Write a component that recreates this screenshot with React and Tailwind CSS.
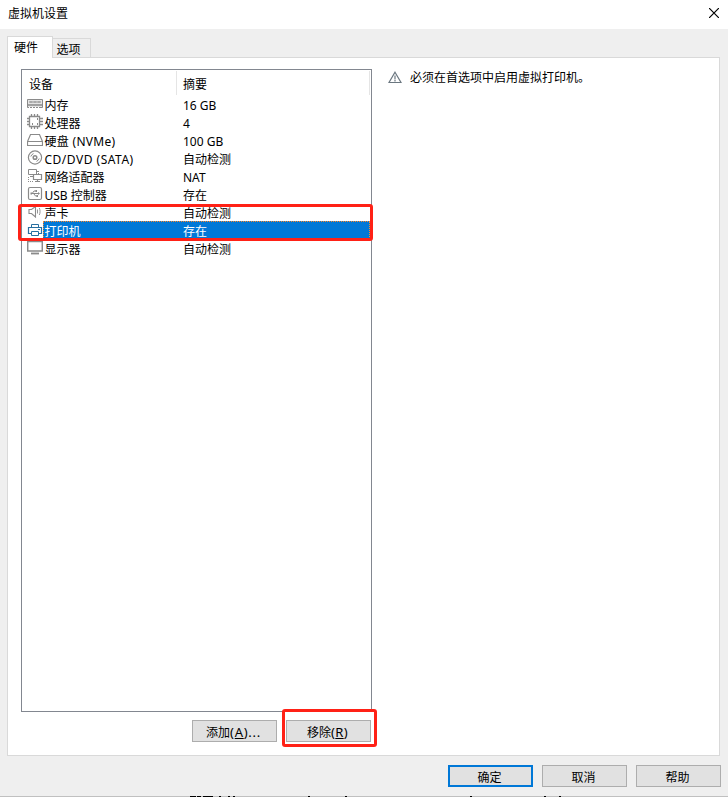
import React, { useState } from 'react';

const devices = [
  { id: 'memory', name: '内存', summary: '16 GB' },
  { id: 'cpu', name: '处理器', summary: '4' },
  { id: 'disk', name: '硬盘 (NVMe)', summary: '100 GB', spacing: 'tracking-[0.3px]' },
  { id: 'cd', name: 'CD/DVD (SATA)', summary: '自动检测', spacing: 'tracking-[0.5px]' },
  { id: 'network', name: '网络适配器', summary: 'NAT' },
  { id: 'usb', name: 'USB 控制器', summary: '存在' },
  { id: 'sound', name: '声卡', summary: '自动检测' },
  { id: 'printer', name: '打印机', summary: '存在' },
  { id: 'display', name: '显示器', summary: '自动检测' },
];

// 16x16 device glyphs
const glyphs = {
  memory: (
    <>
      <path d="M.5 3.5h15v8H.5z" fill="#e4e4e4" />
      <path d="M2.5 5.5h3v1h-3zM6.5 5.5h3v1h-3zM10.5 5.5h3v1h-3z" stroke="#aaa" />
      <path d="M1 9h14" strokeWidth="1.5" />
      <path d="M2 11.5h12" stroke="#fff" strokeDasharray="1 2" />
    </>
  ),
  cpu: (
    <>
      <path d="M2.5 2.5h10v10h-10z" strokeWidth="1.3" />
      <path d="M4.5 0v2M7.5 0v2M10.5 0v2M4.5 13v2M7.5 13v2M10.5 13v2M0 4.5h2M0 7.5h2M0 10.5h2M13 4.5h3M13 7.5h3M13 10.5h3" strokeWidth="1.3" />
      <path d="M10.5 4v2M10.5 9v2M5.5 9v2" />
    </>
  ),
  disk: <path d="M3.5 2.5h9l3 7v4H.5v-4zM.5 9.5h15" strokeWidth="1.2" />,
  cd: (
    <>
      <circle cx="8" cy="7.5" r="6.6" strokeWidth="1.2" />
      <circle cx="8" cy="7.5" r="1.8" strokeWidth="1.5" />
      <path d="M3.8 6.5q.7-2 2.7-2.9M12.2 8.5q-.7 2-2.7 2.9" />
    </>
  ),
  network: (
    <>
      <path d="M1.5 1.5h8v5h-8z" />
      <path d="M6.5 6.5h8v5h-8z" fill="#fff" strokeWidth="1.2" />
      <path d="M3 8.5h3M10.5 12v2M8 13.5h5" strokeWidth="1.2" />
      <path d="M1.5 9v5M1 13.5h6M11.5 3v3M10 3.5h2" strokeDasharray="1 1" />
    </>
  ),
  usb: (
    <>
      <rect x="1.5" y="1.5" width="13" height="12" rx="1.5" strokeWidth="1.2" />
      <path d="M4 7.5h8M5.5 7L7 5h2M7 8l1.5 2H10" />
      <path d="M3.5 6.500H5v2H3.5zM11 6l2 1.500L11 9zM8.500 4H10v2H8.500zM9.500 9H11v2H9.500z" fill="#8a8a8a" stroke="none" />
    </>
  ),
  sound: (
    <>
      <path d="M2 5.5h2.500L8.500 2.500v10.500l-4-3.500H2z" strokeWidth="1.1" />
      <path d="M10.500 5.500v4M12.300 4c1 2 1 5 0 7" strokeWidth=".9" />
    </>
  ),
  printer: (
    <>
      <path d="M4.500 5.500v-3h7v3" />
      <path d="M4 11.500H1.500v-6h13v6H12" strokeWidth="1.2" />
      <path d="M4.500 9.500h7v4h-7zM11 7.500h2" />
    </>
  ),
  display: (
    <>
      <path d="M.7 1.500h14.600v9.500H.7z" strokeWidth="1.500" />
      <path d="M4 13.500h8" strokeWidth="1.800" />
    </>
  ),
};

function DeviceIcon({ id }) {
  return (
    <svg width="16" height="16" viewBox="0 0 16 16" fill="none" stroke={id === 'printer' ? '#286fa0' : '#8a8a8a'} className="shrink-0">
      {glyphs[id]}
    </svg>
  );
}

function DialogButton({ children, primary }) {
  return (
    <button
      className={
        primary
          ? 'h-[22px] w-[85px] border-2 border-[#0078d7] bg-[#e1e1e1] pt-px pr-0.5 leading-[19px]'
          : 'h-[22px] w-[85px] border border-[#adadad] bg-[#e1e1e1] pt-px pr-0.5 leading-[21px]'
      }
    >
      {children}
    </button>
  );
}

export default function App() {
  const [selected, setSelected] = useState('printer');

  return (
    <div className="relative flex h-[797px] w-[728px] flex-col overflow-hidden bg-[#efefef] font-['Noto_Sans','Noto_Sans_CJK_SC',sans-serif] text-[12px] text-black">
      {/* Title bar */}
      <header className="flex h-[29px] shrink-0 items-start justify-between bg-white pr-[9px] pl-2">
        <h1 className="leading-[27px]">虚拟机设置</h1>
        <button aria-label="关闭" className="mt-2">
          <svg width="10" height="10" viewBox="0 0 10 10" stroke="#000" strokeWidth="1.2">
            <path d="M0 0l10 10M10 0L0 10" />
          </svg>
        </button>
      </header>

      {/* Tabs */}
      <nav className="flex h-7 shrink-0 items-end pl-[7px]">
        <button className="z-10 -mb-px h-[22px] w-[46px] border border-b-0 border-[#d9d9d9] bg-white pr-2 leading-5">硬件</button>
        <button className="h-[19px] w-[38px] border border-b-0 border-l-0 border-[#d9d9d9] pt-px pr-1.5 leading-[19px]">选项</button>
      </nav>

      <main className="ml-[7px] flex h-[699px] w-[713px] shrink-0 border border-[#d9d9d9] bg-white pt-[11px] pl-[13px]">
        <section className="w-[351px]">
          <div className="h-[643px] border border-[#828790]">
            <div className="flex h-[25px] pt-px pr-px leading-[27px]">
              <div className="h-6 w-[155px] border-r border-[#e5e5e5] pl-[7px]">设备</div>
              <div className="h-6 flex-1 border-r border-[#e5e5e5] pl-1.5">摘要</div>
            </div>
            {devices.map((d) => (
              <div key={d.id} onClick={() => setSelected(d.id)} className="flex h-[18px] items-center pl-[5px] leading-[18px]">
                <DeviceIcon id={d.id} />
                <div
                  className={
                    selected === d.id
                      ? 'mr-px flex h-[18px] flex-1 items-center border border-dotted border-[#ff8728] bg-[#0078d7] pt-[3px] text-white'
                      : 'mr-px flex h-[18px] flex-1 items-center border border-transparent pt-[3px]'
                  }
                >
                  <span className={`w-[139px] pl-[0.5px] whitespace-nowrap ${d.spacing || ''}`}>{d.name}</span>
                  <span>{d.summary}</span>
                </div>
              </div>
            ))}
          </div>
          <div className="mt-2 flex justify-end gap-[9px] pr-px">
            <DialogButton>添加<span className="text-[13px] tracking-[0.7px]">(<u>A</u>)...</span></DialogButton>
            <DialogButton>移除<span className="text-[13px] tracking-[0.3px]">(<u>R</u>)</span></DialogButton>
          </div>
        </section>

        <aside className="flex h-4 items-center gap-2 pl-4">
          <svg width="14" height="13" viewBox="0 0 14 13" fill="none" stroke="#6b7780" strokeWidth="1.2">
            <path d="M7 1.200L13 11.500H1z" />
            <path d="M7 4.500v4M7 9v1.500" />
          </svg>
          <span className="pt-[2px]">必须在首选项中启用虚拟打印机。</span>
        </aside>
      </main>

      <footer className="mt-[9px] flex shrink-0 justify-end gap-[9px] pr-[7px]">
        <DialogButton primary>确定</DialogButton>
        <DialogButton>取消</DialogButton>
        <DialogButton>帮助</DialogButton>
      </footer>

      {/* Window edge, with a sliver of what lies beneath */}
      <svg width="728" height="1" viewBox="0 0 728 1" className="mt-auto shrink-0 bg-[#c0c0c0]" stroke="#000">
        <path d="M190 .5h6M197 .5h4M203 .5h10M219 .5h2M228 .5h2M233 .5h2M308 .5h2M345 .5h2M470 .5h2M544 .5h2M559 .5h2" />
      </svg>

      {/* Highlight frames */}
      <div className="pointer-events-none absolute top-[204px] left-[18px] h-[37px] w-[355px] rounded-[3px] border-3 border-[#ff2116]" />
      <div className="pointer-events-none absolute top-[709px] left-[282px] h-[38px] w-[95px] rounded-[3px] border-3 border-[#ff2116]" />
    </div>
  );
}
